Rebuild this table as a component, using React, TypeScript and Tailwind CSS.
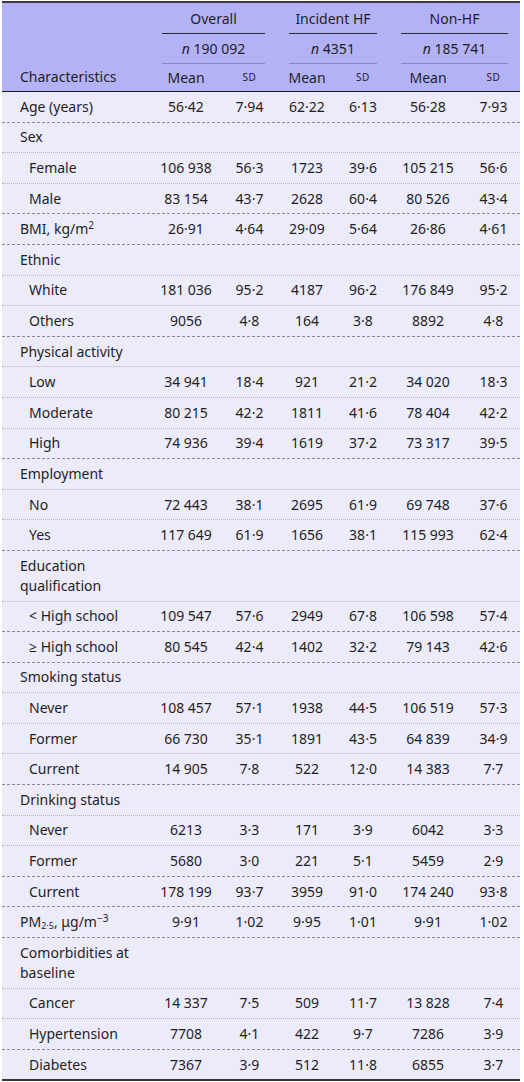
import React from "react";

type Row = {
  label: React.ReactNode;
  sub?: boolean;
  vals?: string[];
  dark?: boolean;
  last?: boolean;
};

const rows: Row[] = [
  { label: "Age (years)", vals: ["56·42", "7·94", "62·22", "6·13", "56·28", "7·93"], dark: true },
  { label: "Sex" },
  { label: "Female", sub: true, vals: ["106 938", "56·3", "1723", "39·6", "105 215", "56·6"] },
  { label: "Male", sub: true, vals: ["83 154", "43·7", "2628", "60·4", "80 526", "43·4"], dark: true },
  {
    label: (
      <>
        BMI, kg/m<span className="text-[10px] align-[5px] leading-[0]">2</span>
      </>
    ),
    vals: ["26·91", "4·64", "29·09", "5·64", "26·86", "4·61"],
    dark: true,
  },
  { label: "Ethnic" },
  { label: "White", sub: true, vals: ["181 036", "95·2", "4187", "96·2", "176 849", "95·2"] },
  { label: "Others", sub: true, vals: ["9056", "4·8", "164", "3·8", "8892", "4·8"], dark: true },
  { label: "Physical activity" },
  { label: "Low", sub: true, vals: ["34 941", "18·4", "921", "21·2", "34 020", "18·3"] },
  { label: "Moderate", sub: true, vals: ["80 215", "42·2", "1811", "41·6", "78 404", "42·2"] },
  { label: "High", sub: true, vals: ["74 936", "39·4", "1619", "37·2", "73 317", "39·5"], dark: true },
  { label: "Employment" },
  { label: "No", sub: true, vals: ["72 443", "38·1", "2695", "61·9", "69 748", "37·6"] },
  { label: "Yes", sub: true, vals: ["117 649", "61·9", "1656", "38·1", "115 993", "62·4"], dark: true },
  { label: "Education qualification" },
  { label: "< High school", sub: true, vals: ["109 547", "57·6", "2949", "67·8", "106 598", "57·4"], dark: true },
  { label: "≥ High school", sub: true, vals: ["80 545", "42·4", "1402", "32·2", "79 143", "42·6"], dark: true },
  { label: "Smoking status" },
  { label: "Never", sub: true, vals: ["108 457", "57·1", "1938", "44·5", "106 519", "57·3"] },
  { label: "Former", sub: true, vals: ["66 730", "35·1", "1891", "43·5", "64 839", "34·9"] },
  { label: "Current", sub: true, vals: ["14 905", "7·8", "522", "12·0", "14 383", "7·7"], dark: true },
  { label: "Drinking status" },
  { label: "Never", sub: true, vals: ["6213", "3·3", "171", "3·9", "6042", "3·3"] },
  { label: "Former", sub: true, vals: ["5680", "3·0", "221", "5·1", "5459", "2·9"], dark: true },
  { label: "Current", sub: true, vals: ["178 199", "93·7", "3959", "91·0", "174 240", "93·8"], dark: true },
  {
    label: (
      <>
        PM<span className="text-[9px] align-[-2px] leading-[0]">2·5</span>, μg/m
        <span className="text-[10px] align-[5px] leading-[0]">−3</span>
      </>
    ),
    vals: ["9·91", "1·02", "9·95", "1·01", "9·91", "1·02"],
    dark: true,
  },
  { label: "Comorbidities at baseline" },
  { label: "Cancer", sub: true, vals: ["14 337", "7·5", "509", "11·7", "13 828", "7·4"] },
  { label: "Hypertension", sub: true, vals: ["7708", "4·1", "422", "9·7", "7286", "3·9"], dark: true },
  { label: "Diabetes", sub: true, vals: ["7367", "3·9", "512", "11·8", "6855", "3·7"], last: true },
];

const cols = "grid grid-cols-[148px_72px_55px_60px_52px_78px_53px]";

export default function App() {
  return (
    <div
      className="w-[524px] h-[1082px] bg-white pt-[1px] pl-[2px] text-[#1f1f1f] text-[14px]"
      style={{ fontFamily: '"Noto Sans", "Open Sans", sans-serif' }}
    >
      <div className="w-[518px]">
        <div className="bg-[#b4b2f7] border-t-2 border-[#3a3a3a] border-b border-b-[#1a1a1a]">
          <div className={cols}>
            <div className="row-span-3 flex items-end pl-[18px] pb-[4px] leading-[20px]">Characteristics</div>
            <div className="col-span-2 px-[12px]">
              <div className="h-[31px] border-b border-[#2a2a2a] flex items-center justify-center">Overall</div>
            </div>
            <div className="col-span-2 px-[12px]">
              <div className="h-[31px] border-b border-[#2a2a2a] flex items-center justify-center">Incident HF</div>
            </div>
            <div className="col-span-2 px-[12px]">
              <div className="h-[31px] border-b border-[#2a2a2a] flex items-center justify-center">Non-HF</div>
            </div>
            <div className="col-span-2 px-[12px]">
              <div className="h-[30px] border-b border-[#8a88c0] flex items-center justify-center">
                <span>
                  <i>n</i> 190 092
                </span>
              </div>
            </div>
            <div className="col-span-2 px-[12px]">
              <div className="h-[30px] border-b border-[#8a88c0] flex items-center justify-center">
                <span>
                  <i>n</i> 4351
                </span>
              </div>
            </div>
            <div className="col-span-2 px-[12px]">
              <div className="h-[30px] border-b border-[#8a88c0] flex items-center justify-center">
                <span>
                  <i>n</i> 185 741
                </span>
              </div>
            </div>
            {["Mean", "SD", "Mean", "SD", "Mean", "SD"].map((t, i) => (
              <div
                key={i}
                className={
                  "h-[27px] flex items-center justify-center " + (t === "SD" ? "text-[10px] tracking-[0.5px]" : "")
                }
              >
                {t}
              </div>
            ))}
          </div>
        </div>
        <div className="bg-[#ebebfa]">
          {rows.map((r, i) => (
            <div
              key={i}
              className={
                cols +
                " leading-[20px] py-[4.8px] " +
                (r.last
                  ? "border-b-2 border-[#333]"
                  : r.dark
                  ? "border-b border-dashed border-[#8a8a92]"
                  : "border-b border-dotted border-[#b4b4c4]")
              }
            >
              <div className={r.sub ? "pl-[27px] pr-[8px]" : "pl-[18px] pr-[8px]"}>{r.label}</div>
              {(r.vals ?? ["", "", "", "", "", ""]).map((v, j) => (
                <div key={j} className="text-center whitespace-nowrap">
                  {v}
                </div>
              ))}
            </div>
          ))}
        </div>
      </div>
    </div>
  );
}
